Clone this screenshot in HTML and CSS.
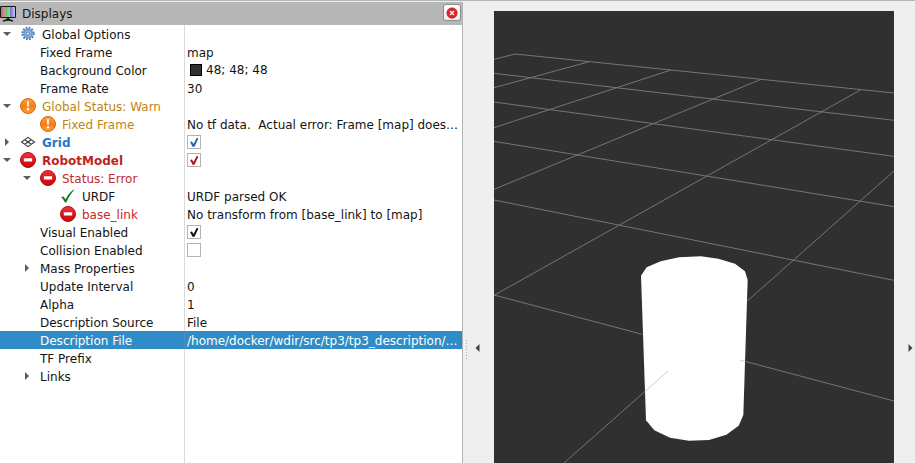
FILE: index.html
```html
<!DOCTYPE html>
<html lang="en">
<head>
<meta charset="utf-8">
<title>Displays</title>
<link rel="stylesheet" href="styles.css">
</head>
<body>
<svg class="defs" aria-hidden="true">
  <defs>
    <linearGradient id="red" x1="0" y1="0" x2="0" y2="1"><stop offset="0" stop-color="#ee3b40"/><stop offset=".5" stop-color="#e01218"/><stop offset="1" stop-color="#c80a10"/></linearGradient>
    <linearGradient id="orange" x1="0" y1="0" x2="0" y2="1"><stop offset="0" stop-color="#f9a04a"/><stop offset=".5" stop-color="#f57f17"/><stop offset="1" stop-color="#ff9d2c"/></linearGradient>
    <linearGradient id="screen"><stop offset="0" stop-color="#b56f78"/><stop offset=".3" stop-color="#d09a9a"/><stop offset=".34" stop-color="#63c468"/><stop offset=".64" stop-color="#8be08c"/><stop offset=".68" stop-color="#7474d4"/><stop offset="1" stop-color="#c4c4fa"/></linearGradient>
    <symbol id="error" viewBox="0 0 16 16"><circle cx="8" cy="8" r="7.5" fill="url(#red)" stroke="#b80d12"/><rect x="3.8" y="6.3" width="8.4" height="3.2" rx=".5" fill="#fff"/></symbol>
    <symbol id="warn" viewBox="0 0 16 16"><circle cx="8" cy="8" r="7.5" fill="url(#orange)" stroke="#d9670c"/><path d="M7 3.2h2l-.3 5.6H7.3z" fill="#fff"/><circle cx="8" cy="11.2" r="1.2" fill="#fff"/></symbol>
    <symbol id="down" viewBox="0 0 8 8"><path d="M0 2h8L4 6z" fill="#5c5c5c"/></symbol>
    <symbol id="right" viewBox="0 0 8 8"><path d="M2 0v8l4-4z" fill="#5c5c5c"/></symbol>
  </defs>
</svg>
<main class="window">
  <section class="dock" aria-label="Displays">
    <header class="titlebar">
      <svg class="monitor" viewBox="0 0 16 16" aria-hidden="true"><rect width="16" height="12" rx="1" fill="#161616"/><rect x="1" y="1" width="14" height="10" fill="url(#screen)"/><path d="M6.500 12h3v2h-3z" fill="#222"/><path d="M3 15.200q5-2.400 10 0" fill="none" stroke="#111" stroke-width="1.3"/></svg>
      <h1 class="title">Displays</h1>
      <button class="close" aria-label="Close"><svg viewBox="0 0 12 12"><circle cx="6" cy="6" r="5.2" fill="#d9252b" stroke="#b7161b" stroke-width=".6"/><path d="M4 4l4 4M8 4L4 8" stroke="#fbe4e4" stroke-width="1.5"/></svg></button>
    </header>
    <div class="tree">
      <table class="props">
        <tbody>
          <tr><th scope="row"><div class="name"><button class="toggle" aria-label="Collapse"><svg><use href="#down"/></svg></button><svg class="icon" viewBox="0 0 16 16"><circle cx="8" cy="7.5" r="5.6" fill="none" stroke="#4a79b8" stroke-width="2.2" stroke-dasharray="1.76 1.17"/><circle cx="8" cy="7.5" r="3.900" fill="#a9c8ec" stroke="#6d9bd3" stroke-width="2.2"/><circle cx="8" cy="7.5" r="1.6" fill="#e8f1fb" stroke="#4677b4"/></svg><span>Global Options</span></div></th><td></td></tr>
          <tr><th scope="row"><div class="name plain">Fixed Frame</div></th><td>map</td></tr>
          <tr><th scope="row"><div class="name plain">Background Color</div></th><td class="control"><div class="color"><span class="swatch"></span>48; 48; 48</div></td></tr>
          <tr><th scope="row"><div class="name plain">Frame Rate</div></th><td>30</td></tr>
          <tr class="warn"><th scope="row"><div class="name"><button class="toggle" aria-label="Collapse"><svg><use href="#down"/></svg></button><svg class="icon"><use href="#warn"/></svg><span>Global Status: Warn</span></div></th><td></td></tr>
          <tr class="warn"><th scope="row"><div class="name level1"><svg class="icon"><use href="#warn"/></svg><span>Fixed Frame</span></div></th><td class="pre">No tf data.  Actual error: Frame [map] does…</td></tr>
          <tr class="grid"><th scope="row"><div class="name"><button class="toggle" aria-label="Expand"><svg><use href="#right"/></svg></button><svg class="icon" viewBox="0 0 16 16"><path d="M8 3.400L14.500 8 8 12.600 1.500 8zM4.750 5.700l6.500 4.600M11.250 5.700L4.750 10.300" fill="none" stroke="#3a3a3a" stroke-width="1.100"/></svg><label for="grid">Grid</label></div></th><td class="control"><input type="checkbox" id="grid" class="check blue" checked></td></tr>
          <tr class="robot"><th scope="row"><div class="name"><button class="toggle" aria-label="Collapse"><svg><use href="#down"/></svg></button><svg class="icon"><use href="#error"/></svg><label for="robot">RobotModel</label></div></th><td class="control"><input type="checkbox" id="robot" class="check red" checked></td></tr>
          <tr class="error"><th scope="row"><div class="name indent"><button class="toggle" aria-label="Collapse"><svg><use href="#down"/></svg></button><svg class="icon"><use href="#error"/></svg><span>Status: Error</span></div></th><td></td></tr>
          <tr><th scope="row"><div class="name level2"><svg class="icon" viewBox="0 0 16 16"><path d="M1 9.300L3.500 8.400 5.600 11.300Q8.600 5 13.600 1.500L14 2Q9.500 7 6.300 14.500H5Q3.500 11 1 9.300z" fill="#1c7a24"/></svg><span>URDF</span></div></th><td>URDF parsed OK</td></tr>
          <tr class="error"><th scope="row"><div class="name level2"><svg class="icon"><use href="#error"/></svg><span>base_link</span></div></th><td>No transform from [base_link] to [map]</td></tr>
          <tr><th scope="row"><div class="name plain"><label for="visual">Visual Enabled</label></div></th><td class="control"><input type="checkbox" id="visual" class="check" checked></td></tr>
          <tr><th scope="row"><div class="name plain"><label for="collision">Collision Enabled</label></div></th><td class="control"><input type="checkbox" id="collision" class="check"></td></tr>
          <tr><th scope="row"><div class="name indent"><button class="toggle" aria-label="Expand"><svg><use href="#right"/></svg></button><span>Mass Properties</span></div></th><td></td></tr>
          <tr><th scope="row"><div class="name plain">Update Interval</div></th><td>0</td></tr>
          <tr><th scope="row"><div class="name plain">Alpha</div></th><td>1</td></tr>
          <tr><th scope="row"><div class="name plain">Description Source</div></th><td>File</td></tr>
          <tr class="selected"><th scope="row"><div class="name plain">Description File</div></th><td>/home/docker/wdir/src/tp3/tp3_description/…</td></tr>
          <tr><th scope="row"><div class="name plain">TF Prefix</div></th><td></td></tr>
          <tr><th scope="row"><div class="name indent"><button class="toggle" aria-label="Expand"><svg><use href="#right"/></svg></button><span>Links</span></div></th><td></td></tr>
        </tbody>
      </table>
    </div>
  </section>
  <div class="splitter">
    <span class="grip"></span>
    <button class="hide" aria-label="Hide left panel"><svg viewBox="0 0 5 8"><path d="M4.500 0v8L.5 4z" fill="#444"/></svg></button>
  </div>
  <svg class="scene" viewBox="12 33 1200 1356" preserveAspectRatio="xMinYMin slice" role="img" aria-label="3D view">
    <g fill="none" stroke="#757575" stroke-width="3">
      <path d="M12 178L76 162 1212 279M12 220L1212 361M12 306L1212 469M12 424L1212 620M12 600L1212 841M12 885L457 1003"/>
      <path d="M298 185L12 263M543 210L12 383M813 238L12 568M1113 269L12 886M1212 513L772 903"/>
    </g>
    <path d="M453 827L470 802 512 784 567 772 633 769 685 776 735 791 765 814 773 840 760 1245 746 1277 709 1304 657 1320 597 1322 540 1313 493 1291 468 1261z" fill="#fff"/>
    <path d="M751 1081L765 1084M534 1113L464 1175" fill="none" stroke="#ccc" stroke-width="3"/>
    <path d="M765 1084L1212 1203M464 1175L222 1389" fill="none" stroke="#757575" stroke-width="3"/>
  </svg>
  <div class="splitter end">
    <button class="hide" aria-label="Show right panel"><svg viewBox="0 0 5 8"><path d="M.5 0v8l4-4z" fill="#444"/></svg></button>
  </div>
</main>
</body>
</html>
```
FILE: styles.css
```css
* {
  box-sizing: border-box;
}

body {
  margin: 0;
  background: #efefef;
  color: #141414;
  font: 12px/18px "DejaVu Sans", sans-serif;
}

button {
  padding: 0;
  border: 0;
  background: none;
}

svg {
  display: block;
}

.defs {
  position: absolute;
  width: 0;
  height: 0;
}

.window {
  display: grid;
  grid-template-columns: 463fr 31px 400fr 21px;
  height: 100vh;
  min-height: 386px;
  border-top: 1px solid #b5b5b5;
}

.dock {
  display: flex;
  flex-direction: column;
  min-width: 0;
  margin-top: 1px;
  border-right: 1px solid #b4b4b4;
}

.titlebar {
  display: flex;
  align-items: center;
  gap: 6px;
  height: 23px;
  padding-right: 1px;
  background: #b7b7b7;
}

.monitor {
  width: 16px;
  height: 16px;
}

.title {
  flex: 1;
  margin: 0;
  font-size: 12px;
  font-weight: normal;
}

.close {
  display: grid;
  place-items: center;
  align-self: flex-start;
  width: 18px;
  height: 17px;
  margin-top: 2px;
  border: 1px solid #8c8c8c;
  border-radius: 3px;
  background: linear-gradient(#fff, #ececec);
}

.close svg {
  width: 12px;
  height: 12px;
}

.tree {
  flex: 1;
  background: linear-gradient(90deg, #fff 184px, #dadada 184px 185px, #fff 185px);
}

.props {
  width: 100%;
  table-layout: fixed;
  border-collapse: collapse;
}

.props th {
  width: 185px;
  height: 18px;
  padding: 0;
  font-weight: normal;
  text-align: left;
}

.props td {
  height: 18px;
  padding: 2px 0 0 2px;
  overflow: hidden;
  line-height: 16px;
  text-overflow: ellipsis;
  white-space: nowrap;
}

.props .control {
  padding-top: 0;
  line-height: 18px;
}

.props .pre {
  white-space: pre;
}

.name {
  display: flex;
  align-items: center;
  height: 18px;
  line-height: 16px;
  white-space: nowrap;
}

.name span,
.plain {
  padding-top: 2px;
}

.name:not(.plain) label {
  padding-top: 2px;
}

.plain {
  padding-left: 40px;
}

.indent {
  padding-left: 20px;
}

.level1 {
  padding-left: 40px;
}

.level2 {
  padding-left: 60px;
}

.toggle {
  flex: none;
  width: 20px;
  padding-left: 3px;
}

.toggle svg {
  width: 8px;
  height: 8px;
}

.icon {
  flex: none;
  width: 16px;
  height: 16px;
  margin-right: 6px;
}

.warn th {
  color: #c08413;
}

.error th {
  color: #c5282d;
}

.grid th {
  color: #2977c4;
  font-weight: bold;
}

.robot th {
  color: #c01f24;
  font-weight: bold;
}

.props .selected {
  background: linear-gradient(90deg, #308cc6 184px, #4a8fbd 184px 185px, #308cc6 185px);
  color: #fff;
}

.color {
  display: flex;
  align-items: center;
  gap: 4px;
  padding-left: 3px;
}

.swatch {
  width: 12px;
  height: 12px;
  border: 1px solid #000;
  background: #303030;
}

.check {
  display: block;
  width: 14px;
  height: 14px;
  margin: 0;
  border: 1px solid #b4b4b4;
  background: #fff;
  color: #111;
  appearance: none;
}

.check:checked::before {
  content: "";
  display: block;
  width: 12px;
  height: 12px;
  background: currentColor;
  clip-path: polygon(17% 50%, 33% 46%, 46% 66%, 72% 16%, 87% 20%, 54% 90%, 38% 90%);
}

.blue {
  color: #1f66ae;
}

.red {
  color: #a81a20;
}

.splitter {
  display: flex;
  align-items: flex-start;
  gap: 8px;
  padding-top: calc(75vh - 8px);
  padding-left: 3px;
}

.grip {
  width: 1px;
  height: 19px;
  background: repeating-linear-gradient(#aaa 0 1px, transparent 1px 3px);
}

.hide {
  margin-top: 4px;
}

.hide svg {
  width: 5px;
  height: 8px;
}

.end {
  justify-content: flex-end;
  padding-right: 2px;
}

.scene {
  width: 100%;
  height: calc(100% - 10px);
  margin-top: 10px;
  background: #303030;
}
```
